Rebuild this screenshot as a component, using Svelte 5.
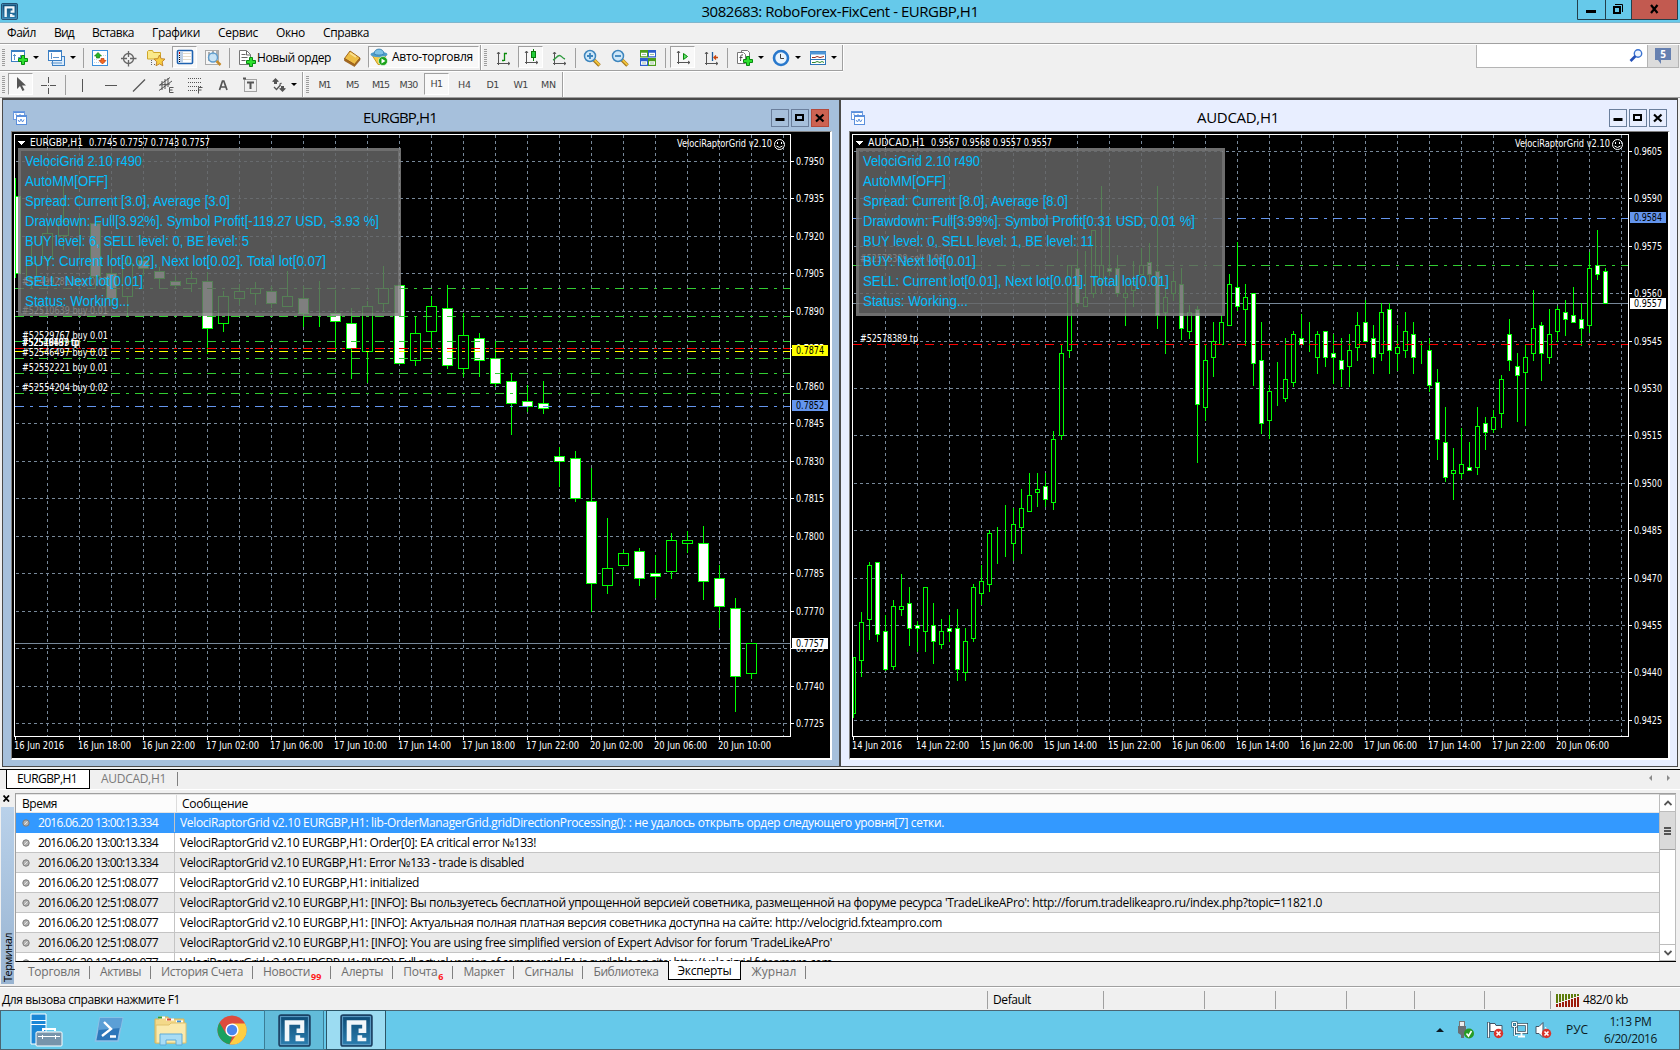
<script lang="ts">
  type Candle = [number, number, number, number, number?];
  type Tool = { icon?: string; kind?: string; gap: number; text?: string; width?: number };

  const menu: [string, number][] = [
    ['Файл', 29], ['Вид', 20], ['Вставка', 42], ['Графики', 48],
    ['Сервис', 40], ['Окно', 29], ['Справка', 46]
  ];

  const mainTools: Tool[] = [
    { kind: 'grip', gap: 2 },
    { icon: 'newchart', gap: 6 }, { kind: 'drop', gap: 3 },
    { icon: 'profiles', gap: 9 }, { kind: 'drop', gap: 3 },
    { kind: 'sep', gap: 7 },
    { icon: 'market', gap: 7 }, { icon: 'target', gap: 10 }, { icon: 'favorites', gap: 10 },
    { icon: 'navigator', kind: 'on', gap: 7 }, { icon: 'tester', gap: 7 },
    { kind: 'sep', gap: 7 },
    { icon: 'order', gap: 8 }, { kind: 'label', text: 'Новый ордер', width: 74, gap: 1 },
    { icon: 'book', gap: 12 },
    { icon: 'robot', kind: 'wide', text: 'Авто-торговля', width: 81, gap: 7 },
    { kind: 'end', gap: 1 },
    { kind: 'grip', gap: 3 },
    { icon: 'bars', gap: 7 }, { icon: 'candles', kind: 'on', gap: 6 }, { icon: 'line', gap: 7 },
    { kind: 'sep', gap: 7 },
    { icon: 'zoomin', gap: 7 }, { icon: 'zoomout', gap: 10 }, { icon: 'tiles', gap: 10 },
    { kind: 'sep', gap: 8 },
    { icon: 'scroll', kind: 'on', gap: 4 }, { icon: 'shift', gap: 7 },
    { kind: 'sep', gap: 7 },
    { icon: 'indicator', gap: 8 }, { kind: 'drop', gap: 3 },
    { icon: 'clock', gap: 8 }, { kind: 'drop', gap: 4 },
    { icon: 'template', gap: 8 }, { kind: 'drop', gap: 3 },
    { kind: 'end', gap: 5 }
  ];

  const drawTools: Tool[] = [
    { kind: 'grip', gap: 2 },
    { icon: 'cursor', kind: 'on', gap: 3 }, { icon: 'cross', gap: 6 },
    { kind: 'sep', gap: 8 },
    { icon: 'vline', gap: 7 }, { icon: 'hline', gap: 11 }, { icon: 'trend', gap: 10 },
    { icon: 'channel', gap: 9 }, { icon: 'fibo', gap: 11 }, { icon: 'text', gap: 10 },
    { icon: 'label', gap: 9 }, { icon: 'arrows', gap: 11 }, { kind: 'drop', gap: 2 },
    { kind: 'end', gap: 5 },
    { kind: 'grip', gap: 3 },
    ...[['M1', 12], ['M5', 13], ['M15', 17], ['M30', 18], ['H1', 12], ['H4', 13], ['D1', 12], ['W1', 14], ['MN', 15]].map(
      ([text, width]) => ({ kind: text === 'H1' ? 'period on' : 'period', text: text as string, width: width as number, gap: 3 })
    ),
    { kind: 'end', gap: 1 }
  ];

  // high, body top, body bottom, low, 1 = falling
  const eurgbp: Candle[] = [
    [178, 196, 273, 277, 1], [245, 263, 278, 288], [225, 233, 258, 266], [185, 221, 235, 249], [215, 221, 221, 258],
    [216, 223, 276, 288, 1], [248, 273, 298, 305, 1], [255, 263, 296, 316], [255, 260, 268, 275, 1], [267, 271, 278, 288, 1],
    [276, 281, 285, 288, 1], [271, 278, 283, 291], [272, 281, 328, 353, 1], [291, 296, 323, 331], [284, 291, 298, 304],
    [282, 288, 293, 304], [286, 291, 303, 307, 1], [271, 296, 306, 306], [286, 298, 313, 326, 1], [281, 310, 310, 326],
    [290, 313, 321, 351, 1], [308, 323, 348, 378, 1], [301, 306, 351, 382], [266, 288, 303, 311], [285, 285, 363, 363, 1],
    [316, 333, 360, 365], [296, 306, 331, 348], [285, 308, 365, 368, 1], [313, 335, 368, 376], [333, 338, 360, 376, 1],
    [341, 358, 383, 386, 1], [374, 381, 403, 434, 1], [385, 401, 406, 411, 1], [381, 403, 408, 413, 1], [447, 456, 461, 486, 1],
    [451, 458, 498, 501, 1], [468, 501, 583, 611, 1], [518, 568, 585, 593], [550, 553, 565, 565], [548, 551, 578, 585, 1],
    [555, 573, 576, 597, 1], [533, 540, 571, 578], [531, 540, 543, 552], [526, 543, 581, 599, 1], [565, 578, 606, 627, 1],
    [598, 608, 676, 711, 1], [643, 643, 673, 678]
  ];

  const audcad: Candle[] = [
    [657, 657, 713, 717], [612, 622, 660, 676], [562, 565, 619, 639], [562, 562, 634, 641, 1], [615, 631, 669, 670, 1],
    [600, 606, 666, 669], [574, 606, 609, 615], [587, 603, 628, 645, 1], [621, 625, 628, 651, 1], [587, 587, 631, 651],
    [603, 625, 641, 663, 1], [619, 631, 644, 648], [615, 628, 631, 641, 1], [609, 628, 669, 680, 1], [628, 641, 672, 680],
    [584, 587, 638, 641], [565, 581, 593, 604], [530, 533, 584, 591], [527, 537, 537, 563], [505, 540, 540, 556],
    [508, 524, 543, 560], [489, 508, 527, 553], [473, 495, 511, 511], [473, 489, 492, 506], [473, 486, 499, 506, 1],
    [431, 439, 502, 509], [344, 353, 435, 439], [265, 265, 350, 357], [251, 268, 303, 306, 1], [251, 297, 306, 306],
    [230, 230, 293, 297], [186, 265, 281, 293], [228, 268, 271, 275, 1], [255, 268, 293, 296, 1], [285, 293, 297, 325],
    [261, 281, 290, 306], [248, 265, 274, 274], [243, 262, 274, 281, 1], [186, 271, 315, 328, 1], [285, 297, 312, 353],
    [271, 281, 293, 300], [268, 284, 328, 339, 1], [305, 312, 331, 338], [306, 309, 404, 462, 1], [344, 360, 407, 420],
    [322, 341, 357, 376], [315, 322, 344, 344], [274, 284, 325, 325], [242, 287, 306, 310, 1], [284, 297, 309, 345],
    [293, 293, 363, 385, 1], [322, 360, 423, 433, 1], [385, 391, 420, 438], [362, 394, 394, 405], [338, 379, 398, 401],
    [331, 334, 382, 386], [314, 338, 344, 344, 1], [322, 341, 341, 351], [331, 334, 357, 373], [331, 331, 357, 366, 1],
    [334, 353, 357, 383, 1], [338, 360, 369, 386, 1], [334, 350, 366, 386], [312, 325, 347, 360], [300, 322, 341, 341, 1],
    [325, 338, 357, 373, 1], [303, 312, 353, 360], [303, 309, 350, 373, 1], [325, 347, 353, 370], [312, 331, 350, 357],
    [322, 334, 357, 373, 1], [341, 353, 353, 363], [338, 350, 385, 391, 1], [369, 382, 439, 459, 1], [407, 442, 477, 481, 1],
    [448, 470, 473, 499], [428, 464, 473, 478], [442, 467, 470, 470, 1], [407, 426, 467, 474], [417, 423, 432, 449, 1],
    [410, 417, 429, 432], [375, 379, 413, 427], [319, 334, 360, 370, 1], [353, 366, 375, 421, 1], [344, 357, 372, 425],
    [290, 328, 353, 360], [322, 325, 353, 380, 1], [309, 334, 357, 363], [306, 309, 331, 341], [300, 312, 319, 335, 1],
    [287, 315, 322, 322, 1], [303, 319, 328, 345, 1], [252, 268, 325, 332], [230, 265, 274, 279, 1], [268, 271, 303, 303, 1]
  ];

  const green = '#32cd32';
  const blue = '#6495ed';

  const charts = [
    {
      title: 'EURGBP,H1', titleWidth: 74, nameWidth: 53, active: false,
      quote: '0.7745 0.7757 0.7743 0.7757',
      left: 12, origin: 15, step: 16, half: 5, candles: eurgbp,
      top: 7950, gridTop: 161, gridStep: 37.5, rows: 16,
      price: 643,
      lines: [[288, green], [316, green], [341, green], [358, green], [373, green], [393, green], [348, '#ff0000'], [351, '#ffff00'], [406, blue]],
      tags: [[345, '0.7874', '#ffff00'], [400, '0.7852', blue], [638, '0.7757', '#ffffff']],
      orders: [
        ['#52499281 buy 0.01', 285, 86], ['#52510639 buy 0.01', 314, 86], ['#52529767 buy 0.01', 339, 86],
        ['#52529767 tp', 346, 57], ['#52546497 tp', 346, 57], ['#52510639 tp', 346, 58],
        ['#52546497 buy 0.01', 356, 86], ['#52552221 buy 0.01', 371, 86], ['#52554204 buy 0.02', 391, 86]
      ],
      dates: ['16 Jun 2016', '16 Jun 18:00', '16 Jun 22:00', '17 Jun 02:00', '17 Jun 06:00', '17 Jun 10:00', '17 Jun 14:00', '17 Jun 18:00', '17 Jun 22:00', '20 Jun 02:00', '20 Jun 06:00', '20 Jun 10:00'],
      panelWidth: 383,
      info: [
        ['VelociGrid 2.10 r490', 117], ['AutoMM[OFF]', 83], ['Spread: Current [3.0], Average [3.0]', 205],
        ['Drawdown: Full[3.92%]. Symbol Profit[-119.27 USD, -3.93 %]', 354],
        ['BUY level: 6, SELL level: 0, BE level: 5', 224],
        ['BUY: Current lot[0.02], Next lot[0.02]. Total lot[0.07]', 301],
        ['SELL: Next lot[0.01]', 118], ['Status: Working...', 105]
      ]
    },
    {
      title: 'AUDCAD,H1', titleWidth: 82, nameWidth: 57, active: true,
      quote: '0.9567 0.9568 0.9557 0.9557',
      left: 850, origin: 853, step: 8, half: 2, candles: audcad,
      top: 9605, gridTop: 151.5, gridStep: 47.4, rows: 13,
      price: 303,
      lines: [[265, green], [344, '#ff0000'], [218, blue]],
      tags: [[212, '0.9584', blue], [298, '0.9557', '#ffffff']],
      orders: [['#52578389 sell 0.01', 262, 84], ['#52578389 tp', 342, 58]],
      dates: ['14 Jun 2016', '14 Jun 22:00', '15 Jun 06:00', '15 Jun 14:00', '15 Jun 22:00', '16 Jun 06:00', '16 Jun 14:00', '16 Jun 22:00', '17 Jun 06:00', '17 Jun 14:00', '17 Jun 22:00', '20 Jun 06:00'],
      panelWidth: 369,
      info: [
        ['VelociGrid 2.10 r490', 117], ['AutoMM[OFF]', 83], ['Spread: Current [8.0], Average [8.0]', 205],
        ['Drawdown: Full[3.99%]. Symbol Profit[0.31 USD, 0.01 %]', 332],
        ['BUY level: 0, SELL level: 1, BE level: 11', 231],
        ['BUY: Next lot[0.01]', 113],
        ['SELL: Current lot[0.01], Next lot[0.01]. Total lot[0.01]', 306], ['Status: Working...', 105]
      ]
    }
  ];

  const log: [string, string, number][] = [
    ['2016.06.20 13:00:13.334', 'lib-OrderManagerGrid.gridDirectionProcessing(): : не удалось открыть ордер следующего уровня[7] сетки.', 764],
    ['2016.06.20 13:00:13.334', 'Order[0]: EA critical error №133!', 356],
    ['2016.06.20 13:00:13.334', 'Error №133 - trade is disabled', 344],
    ['2016.06.20 12:51:08.077', 'initialized', 239],
    ['2016.06.20 12:51:08.077', "[INFO]: Вы пользуетесь бесплатной упрощенной версией советника, размещенной на форуме ресурса 'TradeLikeAPro': http://forum.tradelikeapro.ru/index.php?topic=11821.0", 1142],
    ['2016.06.20 12:51:08.077', '[INFO]: Актуальная полная платная версия советника доступна на сайте: http://velocigrid.fxteampro.com', 762],
    ['2016.06.20 12:51:08.077', "[INFO]: You are using free simplified version of Expert Advisor for forum 'TradeLikeAPro'", 652],
    ['2016.06.20 12:51:08.077', '[INFO]: Full actual version of commercial EA is available on site: http://velocigrid.fxteampro.com', 652]
  ];

  const tabs: [string, number, string?][] = [
    ['Торговля', 52], ['Активы', 41], ['История Счета', 82], ['Новости', 47, '99'], ['Алерты', 42],
    ['Почта', 34, '6'], ['Маркет', 41], ['Сигналы', 49], ['Библиотека', 65], ['Эксперты', 54], ['Журнал', 45]
  ];

  const statusCells = [116, 101, 71, 71, 68, 70, 66];

  // spreads or tightens the letters so a label takes exactly the given length
  function fit(node: HTMLElement, length: number) {
    const box = node.getBoundingClientRect();
    const vertical = getComputedStyle(node).writingMode.startsWith('vertical');
    const natural = vertical ? box.height : box.width;
    node.style.letterSpacing = `${(length - natural) / node.textContent!.length}px`;
  }

  function range(n: number) {
    return Array.from({ length: n }, (_, i) => i);
  }
</script>

{#snippet plus(x: number, y: number)}
  <path d="M{x + 3.5} {y + .5}h3v3h3v3h-3v3h-3v-3h-3v-3h3z" fill="#2ee02e" stroke="#078a10" />
{/snippet}

{#snippet icon(name: string)}
  <svg class="icon" width="18" height="18" viewBox="0 0 18 18">
    {#if name === 'newchart'}
      <rect x=".5" y="1.5" width="13" height="11" fill="#fff" stroke="#3b7fc4" />
      <path d="M0 2h14" stroke="#3b7fc4" stroke-width="2" />
      <path d="M3.500 5v6M2 6.500h3M7 8.500h4M9.500 6v4" stroke="#5c93cb" />
      {@render plus(7, 6)}
    {:else if name === 'profiles'}
      <rect x="4.500" y="7.500" width="12" height="9" fill="#dcecfb" stroke="#3b7fc4" />
      <rect x=".5" y="1.500" width="13" height="10" fill="#fff" stroke="#3b7fc4" />
      <path d="M0 2h14" stroke="#3b7fc4" stroke-width="2" />
      <path d="M3.500 4v6M5 8.500h6M3 14h11" stroke="#5c93cb" />
    {:else if name === 'market'}
      <rect x="1.500" y="1.500" width="15" height="15" fill="#fff" stroke="#3b8fdd" />
      <path d="M3 13.500h12M3 10.500h3M12 6.500h3" stroke="#bcd3e8" stroke-dasharray="1 1" />
      <path d="M7 3.500l3.500 3.500h-2v2h-3v-2h-2z" fill="#25b425" stroke="#118011" stroke-width=".7" />
      <path d="M11.500 15l-3.500-3.500h2v-2h3v2h2z" fill="#f36a21" stroke="#c03c08" stroke-width=".7" />
    {:else if name === 'target'}
      <circle cx="9.500" cy="9.500" r="5" fill="none" stroke="#666" stroke-width="1.300" />
      <path d="M9.500 2v6M9.500 11v6.500M2 9.500h6M11 9.500h6.500" stroke="#666" stroke-width="1.300" />
    {:else if name === 'favorites'}
      <path d="M.5 10V2.500l1-1h4l1 2h7V10z" fill="#fae98a" stroke="#cfa62a" />
      <path d="M4.500 11v5M7 15.500h1" stroke="#666" stroke-dasharray="1 1" />
      <path d="M12.500 6l1.700 3.700 3.800.4-2.900 2.700.8 4-3.400-2-3.500 2 .8-4-2.800-2.700 3.800-.4z" fill="#f8cf42" stroke="#c4862b" />
    {:else if name === 'navigator'}
      <rect x="1.500" y="2.500" width="15" height="13" rx="1" fill="#fff" stroke="#1e62b0" stroke-width="1.600" />
      <path d="M5.500 3v12" stroke="#bcd0e6" stroke-width="3" />
      <path d="M3.500 4v2" stroke="#c00" />
      <path d="M3.500 7v8" stroke="#000" stroke-dasharray="1 1" />
      <path d="M7 5.500h8M7 8.500h8M7 11.500h8" stroke="#e4dccb" />
    {:else if name === 'tester'}
      <rect x="1.500" y="1.500" width="13" height="14" fill="#f6f6f6" stroke="#aaa" />
      <path d="M5 3v9M9 2v4M13 2v5" stroke="#666" />
      <circle cx="9" cy="8.500" r="4.500" fill="#bfdff5" fill-opacity=".85" stroke="#5f9ccc" stroke-width="1.400" />
      <path d="M12.500 12l4 4" stroke="#c58a2a" stroke-width="2.500" />
    {:else if name === 'order'}
      <path d="M1.500 1.500h7l4 4v10h-11z" fill="#fff" stroke="#777" />
      <path d="M3.500 5.500h4M3.500 8.500h6M3.500 11.500h4M8.500 2v4h4" stroke="#666" fill="none" />
      {@render plus(8, 8)}
    {:else if name === 'book'}
      <path d="M7 2l10 7-5.500 6.500L1.500 9.500z" fill="#edbd45" stroke="#a3671b" />
      <path d="M1.500 9.500v2.200l10 5.800 5.500-6.500V9l-5.500 6.500z" fill="#a86a1d" stroke="#8a5416" stroke-width=".6" />
      <path d="M7 4l6 4" stroke="#f9e08d" stroke-width="2" />
    {:else if name === 'robot'}
      <path d="M2 7h14l-3 9.500H8z" fill="#f6cd49" stroke="#c99a22" />
      <ellipse cx="9" cy="6.500" rx="8.500" ry="2.700" fill="#4f9dcb" />
      <path d="M4 6c0-6.500 10-6.500 10 0-3 1.500-7 1.500-10 0z" fill="#7fc3e6" stroke="#3d86b5" />
      <circle cx="13" cy="13" r="4.500" fill="#19a319" stroke="#fff" stroke-width=".6" />
      <path d="M11.500 10.500v5l4-2.500z" fill="#fff" />
    {:else if name === 'bars'}
      <path d="M4.500 3v13M3 14.500h13M3 5l1.500-2L6 5M14 13l2 1.500-2 1.500" stroke="#555" fill="none" />
      <path d="M10.500 4v8M10 4.500h3M8 11.500h2" stroke="#0a8a0a" stroke-width="1.300" />
    {:else if name === 'candles'}
      <path d="M4.500 3v13M3 14.500h13M3 5l1.500-2L6 5M14 13l2 1.500-2 1.500" stroke="#555" fill="none" />
      <path d="M11.500 1v12" stroke="#0a7a0a" />
      <rect x="9.500" y="3.500" width="4" height="6" fill="#23cc3b" stroke="#0a7a0a" />
    {:else if name === 'line'}
      <path d="M4.500 3v13M3 14.500h13M3 5l1.500-2L6 5M14 13l2 1.500-2 1.500" stroke="#555" fill="none" />
      <path d="M3 11c3-1 4-4.500 6.500-4.500 2 0 2.500 2.500 5.500 3.500" stroke="#2f9a3f" stroke-width="1.400" fill="none" />
    {:else if name === 'zoomin' || name === 'zoomout'}
      <path d="M11 11l5.500 5.500" stroke="#a0741c" stroke-width="3.500" />
      <path d="M11.500 11l5 5" stroke="#f2c53c" stroke-width="1.800" />
      <circle cx="7" cy="7" r="5.500" fill="#cfe8f9" stroke="#3d85bd" stroke-width="1.500" />
      <path d={name === 'zoomin' ? 'M4 7h6M7 4v6' : 'M4 7h6'} stroke="#3d85bd" stroke-width="1.800" />
    {:else if name === 'tiles'}
      <rect x="1" y="1" width="8" height="7.500" fill="#4b9d1c" /><rect x="9" y="1" width="8" height="7.500" fill="#2c5fcf" />
      <rect x="1" y="9" width="8" height="8" fill="#2c5fcf" /><rect x="9" y="9" width="8" height="8" fill="#4b9d1c" />
      <path d="M2 5.500h6M10 5.500h6M2 14h6M10 14h6" stroke="#fff" stroke-width="3.500" />
      <path d="M3 5.500h4M11 5.500h4M3 14h4M11 14h4" stroke="#9dc0a0" />
    {:else if name === 'scroll'}
      <path d="M4.500 3v13M3 14.500h13M3 5l1.500-2L6 5M14 13l2 1.500-2 1.500" stroke="#555" fill="none" />
      <path d="M9.500 5.500v6l4-3z" fill="#5de06b" stroke="#0a8a0a" />
    {:else if name === 'shift'}
      <path d="M4.500 3v13M3 14.500h13M3 5l1.500-2L6 5M14 13l2 1.500-2 1.500" stroke="#555" fill="none" />
      <path d="M10.500 3v9" stroke="#1d5c9c" stroke-width="1.300" />
      <path d="M16 8.500h-4M14 6.500l-2 2 2 2" stroke="#c8460d" stroke-width="1.300" fill="none" />
    {:else if name === 'indicator'}
      <path d="M5.500 1.500h6l2 2v9h-8z" fill="#fff" stroke="#777" />
      <path d="M1.500 3.500h6l2 2v9h-8z" fill="#fff" stroke="#777" />
      <path d="M7 6c-3-1-2 2-2.500 6M3.500 8.500h3" stroke="#444" fill="none" />
      {@render plus(7, 7)}
    {:else if name === 'clock'}
      <circle cx="9" cy="9" r="7" fill="#eaf4fd" stroke="#2878cc" stroke-width="2.600" />
      <path d="M8.500 5v4.500H12" stroke="#444" fill="none" />
    {:else if name === 'template'}
      <rect x="1.500" y="2.500" width="15" height="13" fill="#fff" stroke="#2d74b8" />
      <path d="M1 4h16" stroke="#4e95d6" stroke-width="3" />
      <path d="M3 8.500h3l2-1 3 1 4-1" stroke="#9c2b1c" fill="none" />
      <path d="M2 10.500h14" stroke="#2d74b8" />
      <path d="M3 13.500h3l2-1 3 1 2-1 2 1" stroke="#2f8a2f" fill="none" />
    {:else if name === 'cursor'}
      <path d="M5 2v12l3-3 2.500 5 2-1-2.500-4.500h4z" fill="#555" />
    {:else if name === 'cross'}
      <path d="M9.500 1v6M9.500 12v6M2 9.500h6M11 9.500h6M9 9.500h1" stroke="#555" />
    {:else if name === 'vline'}
      <path d="M9.500 3v13" stroke="#555" />
    {:else if name === 'hline'}
      <path d="M3 9.500h12" stroke="#555" />
    {:else if name === 'trend'}
      <path d="M3 15.500L15 3.500" stroke="#555" stroke-width="1.200" />
    {:else if name === 'channel'}
      <path d="M2 9.500L13 1.500M2 14.500L15 5M5 5v9M8 3v10M11 2v9M3 9l10-1" stroke="#555" />
      <path d="M16.500 11.500h-4v5h4M12.500 14h3" stroke="#555" fill="none" />
    {:else if name === 'fibo'}
      <path d="M2 2.500h14M2 6.500h14M2 10.500h14M2 14.500h9" stroke="#555" stroke-dasharray="1 1" />
      <path d="M16.500 11.500h-4v6M12.500 14h3" stroke="#555" fill="none" />
    {:else if name === 'text'}
      <path d="M5.500 14L8.500 5h1.300L13 14M6.500 11h5.500" stroke="#555" stroke-width="1.700" fill="none" />
    {:else if name === 'label'}
      <rect x="3.500" y="3.500" width="12" height="12" fill="none" stroke="#555" stroke-dasharray="1 1" />
      <path d="M2 2.500h3M6 6.500h7M9.500 6v7" stroke="#555" stroke-width="2" />
    {:else if name === 'arrows'}
      <path d="M5.500 2L9 5.500 7 6v2L4 8V6L2 5.500z M12.500 16L9 12.500l2-.5v-2h3v2l2 .5z" fill="#555" />
      <path d="M4 11l2.500 2.500L10.500 9M9.500 8.500l2-1.500" stroke="#555" stroke-width="1.300" fill="none" />
    {/if}
  </svg>
{/snippet}

{#snippet toolbar(tools: Tool[])}
  {#each tools as tool}
    <div class="tool {tool.kind ?? ''}" style:margin-left="{tool.gap}px">
      {#if tool.icon}{@render icon(tool.icon)}{/if}
      {#if tool.text}<span use:fit={tool.width!}>{tool.text}</span>{/if}
      {#if tool.kind === 'drop'}<i class="caret"></i>{/if}
    </div>
  {/each}
{/snippet}

{#snippet logo(size: number)}
  <svg class="logo" width={size} height={size} viewBox="0 0 32 32">
    <defs>
      <linearGradient id="logo-bg" x1="0" y1="0" x2="0" y2="1">
        <stop offset="0" stop-color="#0d4a74" /><stop offset="1" stop-color="#2b7fb0" />
      </linearGradient>
    </defs>
    <rect x="1" y="1" width="30" height="30" rx="2" fill="url(#logo-bg)" stroke="#1d3f60" stroke-width="1.500" />
    <rect x="2.500" y="2.500" width="27" height="27" fill="none" stroke="#5d9cc4" />
    <path d="M6.500 26.500V6h19v12.500h-7.500v-4.500h3.500v-3.500H11v16z M17 20.500v6h8.500v-3.500h-4v-2.500z" fill="#f2f7fa" />
  </svg>
{/snippet}

<div class="app">
  <header class="titlebar">
    <div class="app-icon">{@render logo(17)}</div>
    <span class="app-title" use:fit={277}>3082683: RoboForex-FixCent - EURGBP,H1</span>
    <div class="window-buttons">
      <svg width="101" height="20" viewBox="0 0 101 20">
        <rect x="54" y="0" width="47" height="19" fill="#c25a50" />
        <path d="M.5 0v19.500h100V0M28.500 0v19M54.500 0v19" fill="none" stroke="#233f4b" />
        <path d="M9 11.500h10" stroke="#000" stroke-width="3" />
        <rect x="37" y="7" width="6" height="6" fill="none" stroke="#000" stroke-width="2" />
        <path d="M38 4.500h7.500V12" fill="none" stroke="#000" />
        <path d="M74 5l6.500 8M80.500 5L74 13" stroke="#000" stroke-width="2.200" />
      </svg>
    </div>
  </header>

  <nav class="menu">
    {#each menu as [name, width]}<span use:fit={width}>{name}</span>{/each}
  </nav>

  <section class="toolbars">
    <div class="bars">
      <div class="bar main">{@render toolbar(mainTools)}</div>
      <div class="bar">{@render toolbar(drawTools)}</div>
    </div>
    <div class="search">
      <svg width="14" height="14" viewBox="0 0 14 14">
        <circle cx="9" cy="4.500" r="3.700" fill="#eef5ff" stroke="#3a72d0" stroke-width="1.400" />
        <path d="M6.500 7L1.500 12" stroke="#2450b8" stroke-width="2.600" />
      </svg>
    </div>
    <div class="chat">
      <svg width="16" height="16" viewBox="0 0 16 16"><path d="M0 0h16v12H6v4l-3-4H0z" fill="#6680b0" /></svg>
      <b>5</b>
    </div>
  </section>

  <main class="mdi">
    {#each charts as chart}
      <section class="child" class:active={chart.active}>
        <div class="child-title">
          <svg class="child-icon" width="15" height="15" viewBox="0 0 15 15">
            <rect x=".5" y=".5" width="11" height="8" fill="#fff" stroke="#6b9ade" />
            <rect x="3.500" y="4.500" width="10" height="9" fill="#fff" stroke="#5a8fdc" />
            <path d="M1 1.500h10M4 5.500h9" stroke="#5a8fdc" />
            <path d="M5 9l1.500 2L8 8l1.500 3L11 8.500M3 4V2.500M6 4h2" fill="none" stroke="#5a8fdc" />
          </svg>
          <span class="child-name" use:fit={chart.titleWidth}>{chart.title}</span>
          <div class="child-buttons">
            <i><svg width="16" height="16" viewBox="0 0 16 16"><path d="M3.500 9.500h9" stroke="#000" stroke-width="3" /></svg></i>
            <i><svg width="16" height="16" viewBox="0 0 16 16"><rect x="4" y="5" width="7" height="5" fill="none" stroke="#000" stroke-width="2" /></svg></i>
            <i class="close"><svg width="16" height="16" viewBox="0 0 16 16"><path d="M4 4.500l7.500 7M11.500 4.500l-7.500 7" stroke="#000" stroke-width="2.200" /></svg></i>
          </div>
        </div>
        <div class="canvas">
          <svg width="818" height="626" viewBox="{chart.left} 132 818 626">
            <g shape-rendering="crispEdges">
              <g stroke="#778899" stroke-dasharray="3 3">
                {#each range(24) as i}
                  <path d="M{chart.origin + 32.5 + i * 32} 135V736" />
                {/each}
                {#each range(chart.rows) as i}
                  <path d="M{chart.origin + 1} {Math.floor(chart.gridTop + i * chart.gridStep) + .5}h774" />
                {/each}
              </g>
              <path d="M{chart.origin} {chart.price + .5}h775" stroke="#778899" />

              {#each chart.candles as [high, top, bottom, low, falling], i}
                {@const x = chart.origin + i * chart.step}
                {@const x1 = i === 0 ? x : x - chart.half}
                <path d="M{x + .5} {high}V{top}M{x + .5} {bottom}V{low + 1}" stroke="#00ff00" />
                <rect
                  x={x1 + .5} y={top + .5}
                  width={x + chart.half - x1} height={bottom - top}
                  fill={falling ? '#ffffff' : '#000000'} stroke="#00ff00"
                />
              {/each}

              {#each chart.lines as [y, color]}
                <path d="M{chart.origin} {+y + .5}h775" stroke={color} stroke-dasharray="9 6 3 6" />
              {/each}

              <path d="M{chart.origin - .5} 737V134.500H{chart.origin + 775.5}V736.500H{chart.origin - .5}" fill="none" stroke="#fff" />
              {#each range(chart.rows) as i}
                <path d="M{chart.origin + 776} {Math.floor(chart.gridTop + i * chart.gridStep) + .5}h3" stroke="#fff" />
              {/each}
              {#each chart.dates as _, i}
                <path d="M{chart.origin + .5 + i * 64} 737v3" stroke="#fff" />
              {/each}
              <path d="M{chart.origin + 3} 141h7l-3.500 4z" fill="#fff" />
            </g>

            <g class="tiny">
              <text x={chart.origin + 15} y="146" textLength={chart.nameWidth} lengthAdjust="spacingAndGlyphs">{chart.title}</text>
              <text x={chart.origin + 21 + chart.nameWidth} y="146" textLength="121" lengthAdjust="spacingAndGlyphs">{chart.quote}</text>
              <text x={chart.origin + 662} y="147" textLength="95" lengthAdjust="spacingAndGlyphs">VelociRaptorGrid v2.10</text>
              {#each range(chart.rows) as i}
                <text x={chart.origin + 781} y={Math.floor(chart.gridTop + i * chart.gridStep) + 4} textLength="28" lengthAdjust="spacingAndGlyphs">0.{chart.top - i * 15}</text>
              {/each}
              {#each chart.dates as date, i}
                <text x={chart.origin - 1 + i * 64} y="749" textLength={i ? 53 : 50} lengthAdjust="spacingAndGlyphs">{date}</text>
              {/each}
              {#each chart.orders as [text, y, width]}
                <text x={chart.origin + 7} {y} textLength={width} lengthAdjust="spacingAndGlyphs">{text}</text>
              {/each}
              {#each chart.tags as [y, text, color]}
                <rect x={chart.origin + 777} {y} width="36" height="11" fill={color} />
                <text class="dark" x={chart.origin + 781} y={+y + 9} textLength="28" lengthAdjust="spacingAndGlyphs">{text}</text>
              {/each}
            </g>

            <g fill="none" stroke="#fff">
              <circle cx={chart.origin + 764.5} cy="144.500" r="5" />
              <path d="M{chart.origin + 762.5} 142v2M{chart.origin + 766.5} 142v2M{chart.origin + 761.5} 146q3 3 6 0" />
            </g>

            <g shape-rendering="crispEdges" fill-opacity=".835">
              <path fill-rule="evenodd" fill="#848484" d="M{chart.origin + 3} 148h{chart.panelWidth}v168h-{chart.panelWidth}zm3 3v162h{chart.panelWidth - 6}v-162z" />
              <rect x={chart.origin + 6} y="151" width={chart.panelWidth - 6} height="162" fill="#666" />
            </g>
            <g class="info">
              {#each chart.info as [text, width], i}
                <text x={chart.origin + 10} y={166 + i * 20} textLength={width} lengthAdjust="spacingAndGlyphs">{text}</text>
              {/each}
            </g>
          </svg>
        </div>
      </section>
    {/each}
  </main>

  <div class="chart-tabs">
    <span class="chart-tab current"><span use:fit={60}>EURGBP,H1</span></span>
    <span class="chart-tab"><span use:fit={65}>AUDCAD,H1</span></span>
    <div class="tab-arrows"><i class="prev"></i><i class="next"></i></div>
  </div>

  <section class="terminal">
    <aside>
      <svg width="7" height="7" viewBox="0 0 7 7"><path d="M.5.500l5.500 6M6 .5L.5 6.500" stroke="#000" stroke-width="1.800" /></svg>
      <div class="handle"><span use:fit={49}>Терминал</span></div>
    </aside>
    <div class="terminal-body">
      <div class="table">
        <div class="rows">
          <div class="row head">
            <div class="time"><span use:fit={35}>Время</span></div>
            <div class="message"><span use:fit={66}>Сообщение</span></div>
          </div>
          {#each log as [time, message, width], i}
            <div class="row" class:selected={i === 0} class:even={i > 0 && i % 2 === 0}>
              <div class="time">
                <svg width="8" height="8" viewBox="0 0 8 8"><circle cx="4" cy="4" r="3.200" fill="#b4b4b4" stroke="#777" /><path d="M2.500 5.500l3-3" stroke="#e8e8e8" /></svg>
                <span use:fit={120}>{time}</span>
              </div>
              <div class="message"><span use:fit={width}>VelociRaptorGrid v2.10 EURGBP,H1: {message}</span></div>
            </div>
          {/each}
        </div>
        <div class="scrollbar">
          <div class="arrow"><svg width="8" height="6" viewBox="0 0 8 6"><path d="M.5 5L4 1.500 7.500 5" fill="none" stroke="#555" stroke-width="1.800" /></svg></div>
          <div class="thumb"><i></i><i></i><i></i></div>
          <div class="arrow down"><svg width="8" height="6" viewBox="0 0 8 6"><path d="M.5 1L4 4.500 7.500 1" fill="none" stroke="#555" stroke-width="1.800" /></svg></div>
        </div>
      </div>
      <div class="tabs">
        {#each tabs as [name, width, badge]}
          <div class="tab" class:current={name === 'Эксперты'} class:before={name === 'Библиотека'}>
            <span use:fit={width}>{name}</span>
            {#if badge}<b>{badge}</b>{/if}
          </div>
        {/each}
      </div>
    </div>
  </section>

  <footer class="status">
    <div class="hint"><span use:fit={178}>Для вызова справки нажмите F1</span></div>
    {#each statusCells as width, i}
      <div class="cell" style:width="{width}px">{#if i === 0}<span use:fit={38}>Default</span>{/if}</div>
    {/each}
    <div class="cell traffic">
      <svg width="23" height="13" viewBox="0 0 23 13" shape-rendering="crispEdges">
        {#each range(8) as i}
          <rect x={i * 3} y="0" width="2" height={9 - i} fill="#5e7d0c" />
          <rect x={i * 3} y={10 - i} width="2" height={3 + i} fill="#9c1c0c" />
        {/each}
      </svg>
      <span use:fit={45}>482/0 kb</span>
    </div>
  </footer>

  <div class="taskbar">
    <svg class="pin server" width="33" height="34" viewBox="0 0 33 34">
      <path d="M1 1h15v18H7v12H1z" fill="#1b87d6" stroke="#fff" />
      <path d="M1 7.500h15M1 11.500h15" stroke="#fff" />
      <path d="M13 18v-2h12v2" fill="none" stroke="#fff" stroke-width="2" />
      <rect x="6" y="19" width="26" height="14" rx="1" fill="#7794ab" stroke="#fff" />
      <path d="M8 23.500h22M12.500 22v4M25.500 22v4" stroke="#fff" />
    </svg>
    <svg class="pin" width="30" height="26" viewBox="0 0 30 26">
      <path d="M6 1h22.500L24 24H1.500z" fill="#2d76ba" stroke="#8fc0e6" stroke-width="1.500" />
      <path d="M6 1h22.500l-2 10L4 13z" fill="#5b9fd6" />
      <path d="M10 5l7 7-9 7M16 19.500h6" fill="none" stroke="#fff" stroke-width="2.400" />
    </svg>
    <svg class="pin" width="33" height="31" viewBox="0 0 33 31">
      <path d="M1 4h4l1-2h8l1 2h15v24H1z" fill="#f3d98a" stroke="#d8b456" />
      <path d="M4 2.500h7M12 4.500h8M22 6.500h7" stroke="#fff" stroke-width="2" />
      <path d="M4 2.500h4" stroke="#2f9e3f" stroke-width="2" />
      <path d="M13 4.500h4" stroke="#d94a3a" stroke-width="2" /><path d="M23 6.500h4" stroke="#3a8fd9" stroke-width="2" />
      <path d="M2 10h13l2-2h15v20H2z" fill="#faeaae" stroke="#e0c26c" />
      <path d="M6 30V19h22v11h-6v-5H12v5z" fill="#a8dcf5" stroke="#5fabd8" />
    </svg>
    <svg class="pin chrome" width="30" height="30" viewBox="0 0 30 30">
      <circle cx="15" cy="15" r="14.500" fill="#dd4b3e" />
      <path d="M2.500 7.700L9 18.500l6 3.500-2.500 7.300A14.500 14.500 0 0 1 2.500 7.700z" fill="#1aa15f" />
      <path d="M15 8.500h13a14.500 14.500 0 0 1-15.500 20.800L20.600 18z" fill="#fdce44" />
      <circle cx="15" cy="15" r="6.600" fill="#fff" /><circle cx="15" cy="15" r="5.200" fill="#4a86ee" />
    </svg>
    <div class="task">{@render logo(33)}</div>
    <div class="task focused">{@render logo(33)}</div>
    <div class="tray">
      <i class="up"></i>
      <svg class="usb" width="18" height="18" viewBox="0 0 18 18">
        <rect x="2.500" y=".5" width="5" height="5" fill="#ececec" stroke="#777" />
        <path d="M1 5h8v7l-2 2v3H4v-3l-3-2z" fill="#6a6f73" />
        <circle cx="12" cy="12.500" r="5" fill="#279b25" /><path d="M9.500 12.500l2 2.500 3-5" fill="none" stroke="#fff" stroke-width="1.600" />
      </svg>
      <svg width="17" height="18" viewBox="0 0 17 18">
        <path d="M1.500 1v16" stroke="#345" stroke-width="2.600" /><path d="M1.500 1.500v15" stroke="#fff" stroke-width="1.200" />
        <path d="M3 2.500h5l1 2h6v7H8l-1-1H3z" fill="#fff" stroke="#456" />
        <circle cx="11.500" cy="12.500" r="4.700" fill="#d9342b" /><path d="M9.500 10.500l4 4M13.500 10.500l-4 4" stroke="#fff" stroke-width="1.600" />
      </svg>
      <svg width="17" height="18" viewBox="0 0 17 18">
        <rect x="5.500" y="3.500" width="10" height="8" fill="#66c9ea" stroke="#2b4a5b" stroke-width="3" />
        <rect x="5.500" y="3.500" width="10" height="8" fill="none" stroke="#fff" stroke-width="1.500" />
        <path d="M7 15.500h7M10.500 12v3" stroke="#fff" stroke-width="1.800" />
        <path d="M1.500 1.500h4v4h-4zM3.500 6v9" fill="#66c9ea" stroke="#2b4a5b" stroke-width="2" />
        <path d="M1.500 1.500h4v4h-4zM3.500 6v8.500h3" fill="none" stroke="#fff" />
      </svg>
      <svg width="17" height="18" viewBox="0 0 17 18">
        <path d="M1 5.500h3l4-4v15l-4-4H1z" fill="#fff" stroke="#456" />
        <path d="M10.500 6q2 3 0 6" fill="none" stroke="#fff" />
        <circle cx="11.500" cy="12.500" r="4.700" fill="#d9342b" /><path d="M9.500 10.500l4 4M13.500 10.500l-4 4" stroke="#fff" stroke-width="1.600" />
      </svg>
      <span class="lang" use:fit={22}>РУС</span>
      <div class="datetime"><span use:fit={42}>1:13 PM</span><span use:fit={53}>6/20/2016</span></div>
    </div>
  </div>
</div>

<style>
  :global(body) {
    margin: 0;
    background: #f0f0f0;
  }

  .app {
    width: 1680px;
    height: 1050px;
    display: flex;
    flex-direction: column;
    overflow: hidden;
    background: #f0f0f0;
    color: #000;
    font: 12px/16px "Open Sans", "Noto Sans", sans-serif;
    white-space: nowrap;
  }

  span {
    display: inline-block;
    flex: none;
  }

  svg {
    display: block;
    flex: none;
  }

  /* Title bar and menu */
  .titlebar {
    height: 22px;
    display: grid;
    grid-template-columns: 1fr auto 1fr;
    background: #66c9ea;
    border-bottom: 1px solid #7fb6cd;
  }

  .app-icon {
    padding: 3px 0 0 1px;
  }

  .app-title {
    font-size: 15px;
    line-height: 23px;
  }

  .window-buttons {
    justify-self: end;
    padding-right: 2px;
  }

  .menu {
    height: 20px;
    display: flex;
    gap: 18px;
    padding-left: 7px;
    border-bottom: 1px solid #a0a0a0;
    line-height: 20px;
  }

  /* Toolbars */
  .toolbars {
    height: 53px;
    display: flex;
    align-items: flex-start;
    border-top: 1px solid #fff;
    box-sizing: border-box;
  }

  .bars {
    flex: 1;
  }

  .bar {
    width: max-content;
    height: 25px;
    display: flex;
    align-items: stretch;
    padding-top: 1px;
  }

  .bar.main {
    padding-top: 0;
    border-bottom: 1px solid #a0a0a0;
    box-shadow: 0 1px #fff;
  }

  .tool {
    display: flex;
    align-items: center;
    justify-content: center;
    box-sizing: border-box;
  }

  .grip {
    width: 3px;
    margin-top: 4px;
    margin-bottom: 3px;
    background: repeating-linear-gradient(#9d9d9d 0 1px, #f0f0f0 1px 2px);
  }

  .sep {
    width: 1px;
    margin-top: 3px;
    margin-bottom: 2px;
    background: #a0a0a0;
  }

  .end {
    width: 1px;
    background: #a0a0a0;
    box-shadow: 1px 0 #fff;
  }

  .on,
  .wide {
    width: 25px;
    margin-top: 1px;
    margin-bottom: 2px;
    background: #f8f8f8;
    border: 1px solid #a0a0a0;
    border-right-color: #fff;
    border-bottom-color: #fff;
  }

  .wide {
    width: 111px;
    gap: 4px;
    justify-content: flex-start;
    padding-left: 1px;
  }

  .drop {
    width: 7px;
  }

  .caret {
    border: 3px solid transparent;
    border-top-color: #000;
    border-bottom: 0;
  }

  .period {
    width: 25px;
    color: #444;
    font-family: "DejaVu Sans", sans-serif;
    font-size: 9.5px;
  }

  .search {
    width: 172px;
    height: 23px;
    display: flex;
    align-items: center;
    justify-content: flex-end;
    padding-right: 4px;
    box-sizing: border-box;
    background: #fff;
    border: 1px solid #b4b4b4;
    border-top: 0;
  }

  .chat {
    width: 31px;
    height: 23px;
    display: grid;
    place-items: center;
    margin-right: 1px;
    box-sizing: border-box;
    background: #dcdcdc;
    border: 1px solid #b4b4b4;
    border-width: 0 1px 1px 0;
  }

  .chat > * {
    grid-area: 1 / 1;
  }

  .chat b {
    color: #fff;
    font-size: 10px;
    line-height: 10px;
    padding-bottom: 4px;
  }

  /* Chart windows */
  .mdi {
    height: 672px;
    display: flex;
    padding-left: 2px;
    box-sizing: border-box;
    border-top: 1px solid #a0a0a0;
  }

  .child {
    width: 838px;
    height: 669px;
    box-sizing: border-box;
    border: 1px solid #4a4a4a;
    border-top-width: 2px;
    background: #a6c0dc;
  }

  .child.active {
    background: #e8eeff;
  }

  .child-title {
    height: 31px;
    display: grid;
    grid-template-columns: 1fr auto 1fr;
    align-items: start;
    padding: 0 10px;
  }

  .child-icon {
    margin-top: 11px;
  }

  .child-name {
    margin: 6px 42px 0 0;
    font-size: 15px;
    line-height: 23px;
  }

  .child-buttons {
    display: flex;
    justify-content: flex-end;
    gap: 2px;
    padding-top: 9px;
  }

  .child-buttons i {
    border: 1px solid #6b7f9c;
  }

  .child:not(.active) .close {
    background: #cd6352;
    border-color: #b5493a;
  }

  .canvas {
    width: 818px;
    margin-left: 8px;
    border: 1px solid #808080;
    border-right: 2px solid #fff;
    border-bottom: 2px solid #fff;
    background: #000;
  }

  .tiny {
    fill: #fff;
    font: 10px "DejaVu Sans Condensed", "DejaVu Sans", sans-serif;
  }

  .tiny .dark {
    fill: #000;
  }

  .info {
    fill: #00bfff;
    font: 14px "Liberation Sans", Arial, sans-serif;
  }

  /* Chart tabs */
  .chart-tabs {
    height: 21px;
    display: flex;
    align-items: flex-start;
    padding-left: 6px;
    box-sizing: border-box;
    border-top: 1px solid #000;
    border-bottom: 1px solid #fff;
  }

  .chart-tab {
    height: 14px;
    margin-top: 2px;
    padding: 0 11px;
    border-right: 1px solid #808080;
    color: #7a7a7a;
    line-height: 13px;
  }

  .chart-tab.current {
    height: 18px;
    margin-top: 0;
    padding: 0 12px 0 10px;
    border: 1px solid #000;
    border-top: 0;
    background: #fff;
    color: #000;
    line-height: 17px;
  }

  .tab-arrows {
    display: flex;
    gap: 15px;
    margin: 5px 10px 0 auto;
  }

  .tab-arrows i {
    border: 3.5px solid transparent;
  }

  .tab-arrows .prev {
    border-right-color: #8a8a8a;
    border-left-width: 0;
  }

  .tab-arrows .next {
    border-left-color: #8a8a8a;
    border-right-width: 0;
  }

  /* Terminal */
  .terminal {
    height: 197px;
    display: flex;
    padding: 3px 3px 2px 0;
    box-sizing: border-box;
    border-bottom: 1px solid #a0a0a0;
  }

  aside {
    width: 15px;
    display: flex;
    flex-direction: column;
    align-items: center;
  }

  aside svg {
    margin: 2px 0 5px -2px;
  }

  .handle {
    width: 13px;
    flex: 1;
    display: flex;
    align-items: flex-end;
    padding-bottom: 2px;
    margin-right: 1px;
    box-sizing: border-box;
    background: linear-gradient(#b9d1ea, #99b4d1);
    font-size: 11px;
    line-height: 13px;
  }

  .handle span {
    writing-mode: vertical-rl;
    transform: rotate(180deg);
  }

  .terminal-body {
    width: 1661px;
    min-width: 0;
  }

  .table {
    height: 169px;
    display: flex;
    box-sizing: border-box;
    border: 1px solid #a0a0a0;
    border-right: 0;
    border-bottom: 1px solid #000;
    background: #fff;
  }

  .rows {
    flex: 1;
    overflow: hidden;
  }

  .row {
    height: 20px;
    display: flex;
    box-sizing: border-box;
    border-bottom: 1px solid #c4c4c4;
    line-height: 20px;
  }

  .row.head {
    height: 19px;
    background: #fcfcfc;
    border-bottom-color: #e4e4e4;
    border-top: 1px solid #e4e4e4;
    line-height: 18px;
  }

  .row.even {
    background: #eaeaea;
  }

  .row.selected {
    background: #3399ff;
    border-bottom-color: #3399ff;
    color: #fff;
  }

  .time {
    width: 159px;
    display: flex;
    align-items: center;
    gap: 8px;
    padding-left: 6px;
    flex: none;
    box-sizing: border-box;
    border-right: 1px solid #c4c4c4;
  }

  .head .time {
    width: 161px;
    border-right-color: #dcdcdc;
  }

  .message {
    padding-left: 5px;
  }

  .scrollbar {
    width: 17px;
    display: flex;
    flex-direction: column;
    box-sizing: border-box;
    border: 1px solid #bcbcbc;
  }

  .arrow {
    height: 16px;
    display: grid;
    place-items: center;
    border-bottom: 1px solid #bcbcbc;
  }

  .arrow.down {
    margin-top: auto;
    height: 15px;
    border-top: 1px solid #bcbcbc;
    border-bottom: 0;
  }

  .thumb {
    height: 38px;
    display: flex;
    flex-direction: column;
    align-items: center;
    justify-content: center;
    gap: 1px;
    box-sizing: border-box;
    border-bottom: 1px solid #9a9a9a;
    background: #dadada;
  }

  .thumb i {
    width: 7px;
    height: 2px;
    background: #555;
  }

  .tabs {
    display: flex;
    padding-left: 3px;
    color: #6d6d6d;
  }

  .tab {
    height: 13px;
    display: flex;
    margin-top: 4px;
    padding: 0 9px 0 10px;
    border-right: 1px solid #808080;
    line-height: 11px;
  }

  .tab.before {
    border-right-color: transparent;
  }

  .tab.current {
    height: 18px;
    margin-top: -1px;
    padding: 0 9px 0 8px;
    border: 1px solid #000;
    border-top: 0;
    background: #fff;
    color: #000;
    line-height: 20px;
  }

  .tab b {
    padding: 5px 0 0 1px;
    margin-bottom: -10px;
    color: #ff2020;
    font-size: 9px;
    line-height: 11px;
  }

  /* Status bar */
  .status {
    height: 23px;
    display: flex;
    border-top: 1px solid #fff;
    box-sizing: border-box;
    line-height: 23px;
  }

  .hint {
    width: 987px;
    padding-left: 2px;
    box-sizing: border-box;
  }

  .cell {
    height: 18px;
    margin-top: 3px;
    padding-left: 5px;
    box-sizing: border-box;
    border-left: 1px solid #a0a0a0;
    line-height: 18px;
  }

  .traffic {
    display: flex;
    align-items: center;
    gap: 4px;
  }

  /* Taskbar */
  .taskbar {
    height: 40px;
    display: flex;
    align-items: center;
    padding-left: 29px;
    box-sizing: border-box;
    border: 1px solid #4b6673;
    background: #66c9ea;
  }

  .pin {
    margin-right: 30px;
  }

  .pin.server {
    margin-right: 31px;
  }

  .pin.chrome {
    margin-right: 17px;
  }

  .task {
    width: 60px;
    height: 40px;
    display: grid;
    place-items: center;
    flex: none;
    margin-right: 2px;
    box-sizing: border-box;
    background: #62bcda;
    border: 1px solid #3b7d96;
  }

  .task.focused {
    background: #9cdcf2;
    border-color: #2b5567;
  }

  .tray {
    display: flex;
    align-items: center;
    margin-left: auto;
    padding-right: 22px;
    gap: 7px;
    color: #0c1a22;
  }

  .up {
    margin-right: 6px;
    border: 4px solid transparent;
    border-bottom-color: #0c1a22;
    border-top: 0;
  }

  .usb {
    margin-right: 5px;
  }

  .lang {
    margin: 0 9px 0 7px;
  }

  .datetime {
    display: flex;
    flex-direction: column;
    align-items: center;
    line-height: 17px;
  }
</style>
